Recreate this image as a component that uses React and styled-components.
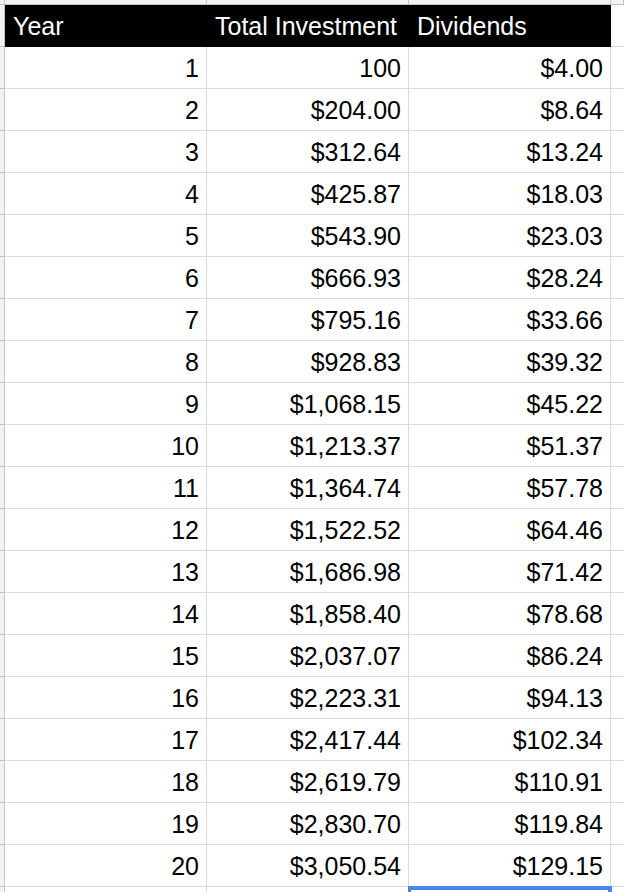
import React from "react";
import styled, { createGlobalStyle, css } from "styled-components";

const GlobalStyle = createGlobalStyle`
  html, body {
    margin: 0;
    padding: 0;
    background: #ffffff;
    overflow: hidden;
  }
  body {
    font-family: "Liberation Sans", Arial, sans-serif;
  }
`;

const COLS = "5px 202px 202px 202px 13px";
const GRID = "#dadada";
const HEAD_LINE = "#c4c4c4";
const HEAD_BG = "#f3f3f3";

const Sheet = styled.div`
  position: relative;
  width: 624px;
  height: 892px;
  overflow: hidden;
  display: flex;
  flex-direction: column;
`;

const Row = styled.div`
  display: grid;
  grid-template-columns: ${COLS};
  grid-template-rows: ${(p) => (p.$strip ? 5 : 42)}px;
  height: ${(p) => (p.$strip ? 5 : 42)}px;
  flex: none;
`;

const RowHead = styled.div`
  box-sizing: border-box;
  background: ${HEAD_BG};
  border-right: 1px solid ${HEAD_LINE};
  border-bottom: 1px solid ${HEAD_LINE};
`;

const ColHead = styled.div`
  box-sizing: border-box;
  background: ${HEAD_BG};
  border-right: 1px solid ${HEAD_LINE};
  border-bottom: 1px solid ${HEAD_LINE};
`;

const Cell = styled.div`
  box-sizing: border-box;
  height: 42px;
  font-size: 25px;
  line-height: 43px;
  padding: 0 7px 0 8px;
  white-space: nowrap;
  overflow: visible;
  text-align: ${(p) => (p.$align === "left" ? "left" : "right")};
  color: #000;
  background: #fff;
  border-right: 1px solid ${GRID};
  border-bottom: 1px solid ${GRID};
  ${(p) =>
    p.$header &&
    css`
      background: #000;
      color: #fff;
      border-right-color: #000;
      border-bottom-color: #000;
    `}
`;

const Spare = styled.div`
  box-sizing: border-box;
  background: #fff;
  border-bottom: 1px solid ${GRID};
`;

const Selection = styled.div`
  position: absolute;
  left: 408px;
  top: 886px;
  width: 204px;
  height: 12px;
  box-sizing: border-box;
  border-top: 4px solid #4a86e8;
  border-left: 3px solid #4a86e8;
  border-right: 4px solid #4a86e8;
`;

const data = [
  ["1", "100", "$4.00"],
  ["2", "$204.00", "$8.64"],
  ["3", "$312.64", "$13.24"],
  ["4", "$425.87", "$18.03"],
  ["5", "$543.90", "$23.03"],
  ["6", "$666.93", "$28.24"],
  ["7", "$795.16", "$33.66"],
  ["8", "$928.83", "$39.32"],
  ["9", "$1,068.15", "$45.22"],
  ["10", "$1,213.37", "$51.37"],
  ["11", "$1,364.74", "$57.78"],
  ["12", "$1,522.52", "$64.46"],
  ["13", "$1,686.98", "$71.42"],
  ["14", "$1,858.40", "$78.68"],
  ["15", "$2,037.07", "$86.24"],
  ["16", "$2,223.31", "$94.13"],
  ["17", "$2,417.44", "$102.34"],
  ["18", "$2,619.79", "$110.91"],
  ["19", "$2,830.70", "$119.84"],
  ["20", "$3,050.54", "$129.15"],
];

export default function App() {
  return (
    <>
      <GlobalStyle />
      <Sheet>
        <Row $strip>
          <RowHead />
          <ColHead />
          <ColHead />
          <ColHead />
          <ColHead />
        </Row>
        <Row>
          <RowHead />
          <Cell $header $align="left">Year</Cell>
          <Cell $header $align="left">Total Investment</Cell>
          <Cell $header $align="left">Dividends</Cell>
          <Spare />
        </Row>
        {data.map((r, i) => (
          <Row key={i}>
            <RowHead />
            <Cell>{r[0]}</Cell>
            <Cell>{r[1]}</Cell>
            <Cell>{r[2]}</Cell>
            <Spare />
          </Row>
        ))}
        <Row>
          <RowHead />
          <Cell />
          <Cell />
          <Cell />
          <Spare />
        </Row>
        <Selection />
      </Sheet>
    </>
  );
}
